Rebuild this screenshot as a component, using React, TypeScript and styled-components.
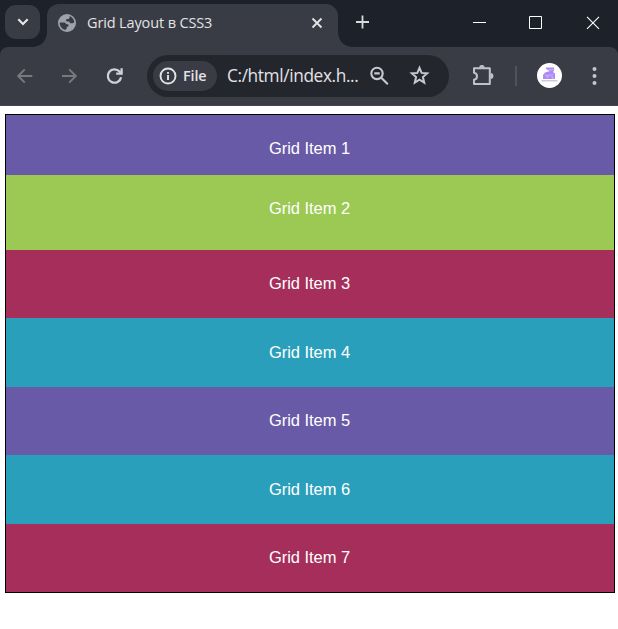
import React from "react";
import styled, { createGlobalStyle } from "styled-components";

const GlobalStyle = createGlobalStyle`
  * { box-sizing: border-box; }
  html, body { margin: 0; padding: 0; background: #fff; overflow: hidden; }
  svg { display: block; flex: none; }
`;

const Window = styled.div`
  width: 618px;
  height: 629px;
  display: flex;
  flex-direction: column;
  background: #fff;
`;

const TabStrip = styled.header`
  display: flex;
  align-items: flex-start;
  height: 47px;
  padding-left: 5px;
  background: #1d2129;
`;

const TabSearch = styled.div`
  display: flex;
  align-items: center;
  justify-content: center;
  width: 35px;
  height: 34px;
  margin: 5px 7px 0 0;
  border-radius: 11px;
  background: #3a3c45;
`;

const Tab = styled.div`
  position: relative;
  display: flex;
  align-items: center;
  width: 291px;
  height: 43px;
  margin-top: 4px;
  padding: 0 15px 6px 10px;
  border-radius: 12px 12px 0 0;
  background: #3a3c45;

  &::before, &::after {
    content: "";
    position: absolute;
    bottom: 0;
    width: 14px;
    height: 14px;
  }
  &::before {
    left: -14px;
    background: radial-gradient(circle at 0 0, transparent 13.5px, #3a3c45 14px);
  }
  &::after {
    right: -14px;
    background: radial-gradient(circle at 100% 0, transparent 13.5px, #3a3c45 14px);
  }
`;

const TabTitle = styled.span`
  flex: 1;
  margin-left: 10px;
  font: 14.5px/20px "Open Sans", "Noto Sans", sans-serif;
  letter-spacing: -0.13px;
  white-space: nowrap;
  color: #e3e3e5;
`;

const NewTab = styled.div`
  margin: 15px 0 0 17px;
`;

const WindowControls = styled.div`
  display: flex;
  align-items: center;
  gap: 43px;
  height: 45px;
  margin: 0 18px 0 auto;
`;

const ToolbarBack = styled.div`
  height: 59px;
  background: #1d2129;
`;

const Toolbar = styled.nav`
  display: flex;
  align-items: center;
  height: 59px;
  padding: 0 12px 1px 15px;
  border-radius: 8px 8px 0 0;
  border-bottom: 1px solid #47444d;
  background: #3a3c45;
`;

const NavButtons = styled.div`
  display: flex;
  align-items: center;
  gap: 25px;
  width: 132px;
`;

const AddressBar = styled.div`
  display: flex;
  align-items: center;
  width: 302px;
  height: 42px;
  padding: 0 19px 0 6px;
  border-radius: 21px;
  background: #24262e;
`;

const SchemeChip = styled.div`
  display: flex;
  align-items: center;
  gap: 6px;
  width: 64px;
  height: 30px;
  padding-left: 6px;
  border-radius: 15px;
  background: #3a3c45;
  color: #e3e3e5;
  font: 600 14.3px/20px "Open Sans", "Noto Sans", sans-serif;
  letter-spacing: -0.1px;
`;

const Url = styled.span`
  flex: 1;
  margin: 1px 0 0 10px;
  font: 17.3px/24px "Open Sans", "Noto Sans", sans-serif;
  letter-spacing: -0.38px;
  white-space: nowrap;
  color: #e3e3e5;
`;

const AddressActions = styled.div`
  display: flex;
  align-items: center;
  gap: 20px;
`;

const ToolbarActions = styled.div`
  display: flex;
  align-items: center;
  flex: 1;
  padding-left: 23px;
`;

const Divider = styled.div`
  width: 2px;
  height: 20px;
  margin: 0 20px;
  background: #50535c;
`;

const Avatar = styled.div`
  display: flex;
  width: 25px;
  height: 25px;
  margin-right: 29px;
  border-radius: 50%;
  background: #fff;
`;

const Page = styled.main`
  padding: 8px 3px 0 5px;
`;

const Grid = styled.div`
  display: grid;
  grid-template-rows: 60px 75px 68.4px 68.4px 68.4px 68.4px 68.4px;
  border: 1px solid #000;
`;

const GridItem = styled.div<{ $color: string }>`
  padding: 24.35px 1px 0 0;
  background: ${(p) => p.$color};
  color: #fff;
  text-align: center;
  font: 16.5px/19px "Liberation Sans", Arial, sans-serif;
  letter-spacing: -0.04px;
`;

const PURPLE = "#685aa6";
const GREEN = "#9bc953";
const CRIMSON = "#a52e5b";
const TEAL = "#2a9fbc";

const items = [PURPLE, GREEN, CRIMSON, TEAL, PURPLE, TEAL, CRIMSON];

const Chevron = () => (
  <svg width="12" height="8" viewBox="0 0 12 8" fill="none" stroke="#e8e8ea" strokeWidth="2.1">
    <path d="M1.3 1.2 6 5.9l4.7-4.7" />
  </svg>
);

const Globe = () => (
  <svg width="20" height="20" viewBox="0 0 20 20">
    <circle cx="10" cy="10" r="9" fill="#9da3ac" />
    <path
      fill="#3a3c45"
      d="M12.6 2.9C15.3 3.8 17.2 6.3 17.3 9.2L15.8 10.2H13.2L12.1 8.6H9.6L8.9 7.2 9.8 5.9H11.6L12.6 4.8Z"
    />
    <path
      fill="#3a3c45"
      d="M2.7 9.6H7.6L9.6 11.2H11.4V13.1L9.7 14.2V15.6L8.2 17.1C5 16.2 2.6 13.4 2.7 9.6Z"
    />
  </svg>
);

const TabClose = () => (
  <svg width="12" height="12" viewBox="0 0 12 12" stroke="#e3e3e5" strokeWidth="1.9">
    <path d="m1.5 1.5 9 9m0-9-9 9" />
  </svg>
);

const Plus = () => (
  <svg width="14" height="14" viewBox="0 0 14 14" stroke="#d8d9dd" strokeWidth="1.8">
    <path d="M7.5.5v13M1 7h13" />
  </svg>
);

const Arrow = ({ flip }: { flip?: boolean }) => (
  <svg width="20" height="20" viewBox="0 0 20 20" fill="none" stroke="#777980" strokeWidth="2">
    <path d={flip ? "M2 10h14M9.2 3.4l6.6 6.6-6.6 6.6" : "M17.3 10H3.2M9.8 3.4 3.2 10l6.6 6.6"} />
  </svg>
);

const Reload = () => (
  <svg width="20" height="20" viewBox="0 0 20 20" fill="none" stroke="#ced0d9" strokeWidth="2.3">
    <path d="M16.1 11.3A6.7 6.7 0 1 1 14.6 5.6L16.5 7.5" />
    <path d="M16.6 2.2v5.5h-5.4" />
  </svg>
);

const Info = () => (
  <svg width="18" height="18" viewBox="0 0 18 18" fill="none" stroke="#e3e3e5" strokeWidth="1.9">
    <circle cx="9" cy="9" r="7.5" />
    <path d="M9 8v5M9 5v1.8" />
  </svg>
);

const ZoomOut = () => (
  <svg width="20" height="20" viewBox="0 0 20 20" fill="none" stroke="#c8c9ce" strokeWidth="2.1">
    <circle cx="8" cy="7.4" r="5.7" />
    <path d="M5.3 7.4h5.4M12 11.4l6.8 6.8" />
  </svg>
);

const Star = () => (
  <svg width="21" height="21" viewBox="0 0 21 21" fill="none" stroke="#c8c9ce" strokeWidth="2">
    <path d="m10.5 2.8 2.1 5.1 5.6.5-4.3 3.7 1.3 5.4-4.7-2.9-4.7 2.9 1.3-5.4-4.3-3.7 5.6-.5Z" />
  </svg>
);

const Puzzle = () => (
  <svg width="23" height="23" viewBox="0 0 23 23">
    <path
      fill="none"
      stroke="#bfc1cf"
      strokeWidth="2"
      strokeLinejoin="round"
      d="M2 4.3h15.8V20H2v-4.2c4-.5 4-6.6 0-7.1Z"
    />
    <path fill="#bfc1cf" d="M7.2 3.8a2.7 2.7 0 0 1 5.4 0ZM18.5 9.1a2.9 2.9 0 0 1 0 5.8Z" />
  </svg>
);

const AvatarArt = () => (
  <svg width="25" height="25" viewBox="0 0 25 25">
    <path fill="#ad8af5" d="M9 4.5h8v3l-1 1.5 2 1.5v5.5H6v-4l2-2.5 5-1.5L9 6Z" />
    <path
      fill="none"
      stroke="#e0d2ff"
      strokeWidth=".6"
      d="m12 6 2 1 3-1M8 12l3 .5 5-1M9 14h3m3-1v2h2"
    />
    <path stroke="#a49abb" strokeWidth=".8" d="M4.5 17.8h16" />
  </svg>
);

const Menu = () => (
  <svg width="6" height="20" viewBox="0 0 6 20" fill="#c5c7ce">
    <circle cx="3.5" cy="3" r="2" />
    <circle cx="3.5" cy="10" r="2" />
    <circle cx="3.5" cy="17" r="2" />
  </svg>
);

const Minimize = () => (
  <svg width="14" height="14" viewBox="0 0 14 14" stroke="#fff">
    <path d="M1 6.5h13" />
  </svg>
);

const Maximize = () => (
  <svg width="14" height="14" viewBox="0 0 14 14" fill="none" stroke="#fff">
    <path d="M.5.5h12v12H.5Z" />
  </svg>
);

const WindowClose = () => (
  <svg width="14" height="14" viewBox="0 0 14 14" stroke="#fff" strokeWidth="1.1">
    <path d="m1 .8 12 12m0-12-12 12" />
  </svg>
);

export default function App() {
  return (
    <Window>
      <GlobalStyle />
      <TabStrip>
        <TabSearch>
          <Chevron />
        </TabSearch>
        <Tab>
          <Globe />
          <TabTitle>Grid Layout в CSS3</TabTitle>
          <TabClose />
        </Tab>
        <NewTab>
          <Plus />
        </NewTab>
        <WindowControls>
          <Minimize />
          <Maximize />
          <WindowClose />
        </WindowControls>
      </TabStrip>
      <ToolbarBack>
        <Toolbar>
          <NavButtons>
            <Arrow />
            <Arrow flip />
            <Reload />
          </NavButtons>
          <AddressBar>
            <SchemeChip>
              <Info />
              File
            </SchemeChip>
            <Url>C:/html/index.h...</Url>
            <AddressActions>
              <ZoomOut />
              <Star />
            </AddressActions>
          </AddressBar>
          <ToolbarActions>
            <Puzzle />
            <Divider />
            <Avatar>
              <AvatarArt />
            </Avatar>
            <Menu />
          </ToolbarActions>
        </Toolbar>
      </ToolbarBack>
      <Page>
        <Grid>
          {items.map((color, i) => (
            <GridItem key={i} $color={color}>
              Grid Item {i + 1}
            </GridItem>
          ))}
        </Grid>
      </Page>
    </Window>
  );
}
